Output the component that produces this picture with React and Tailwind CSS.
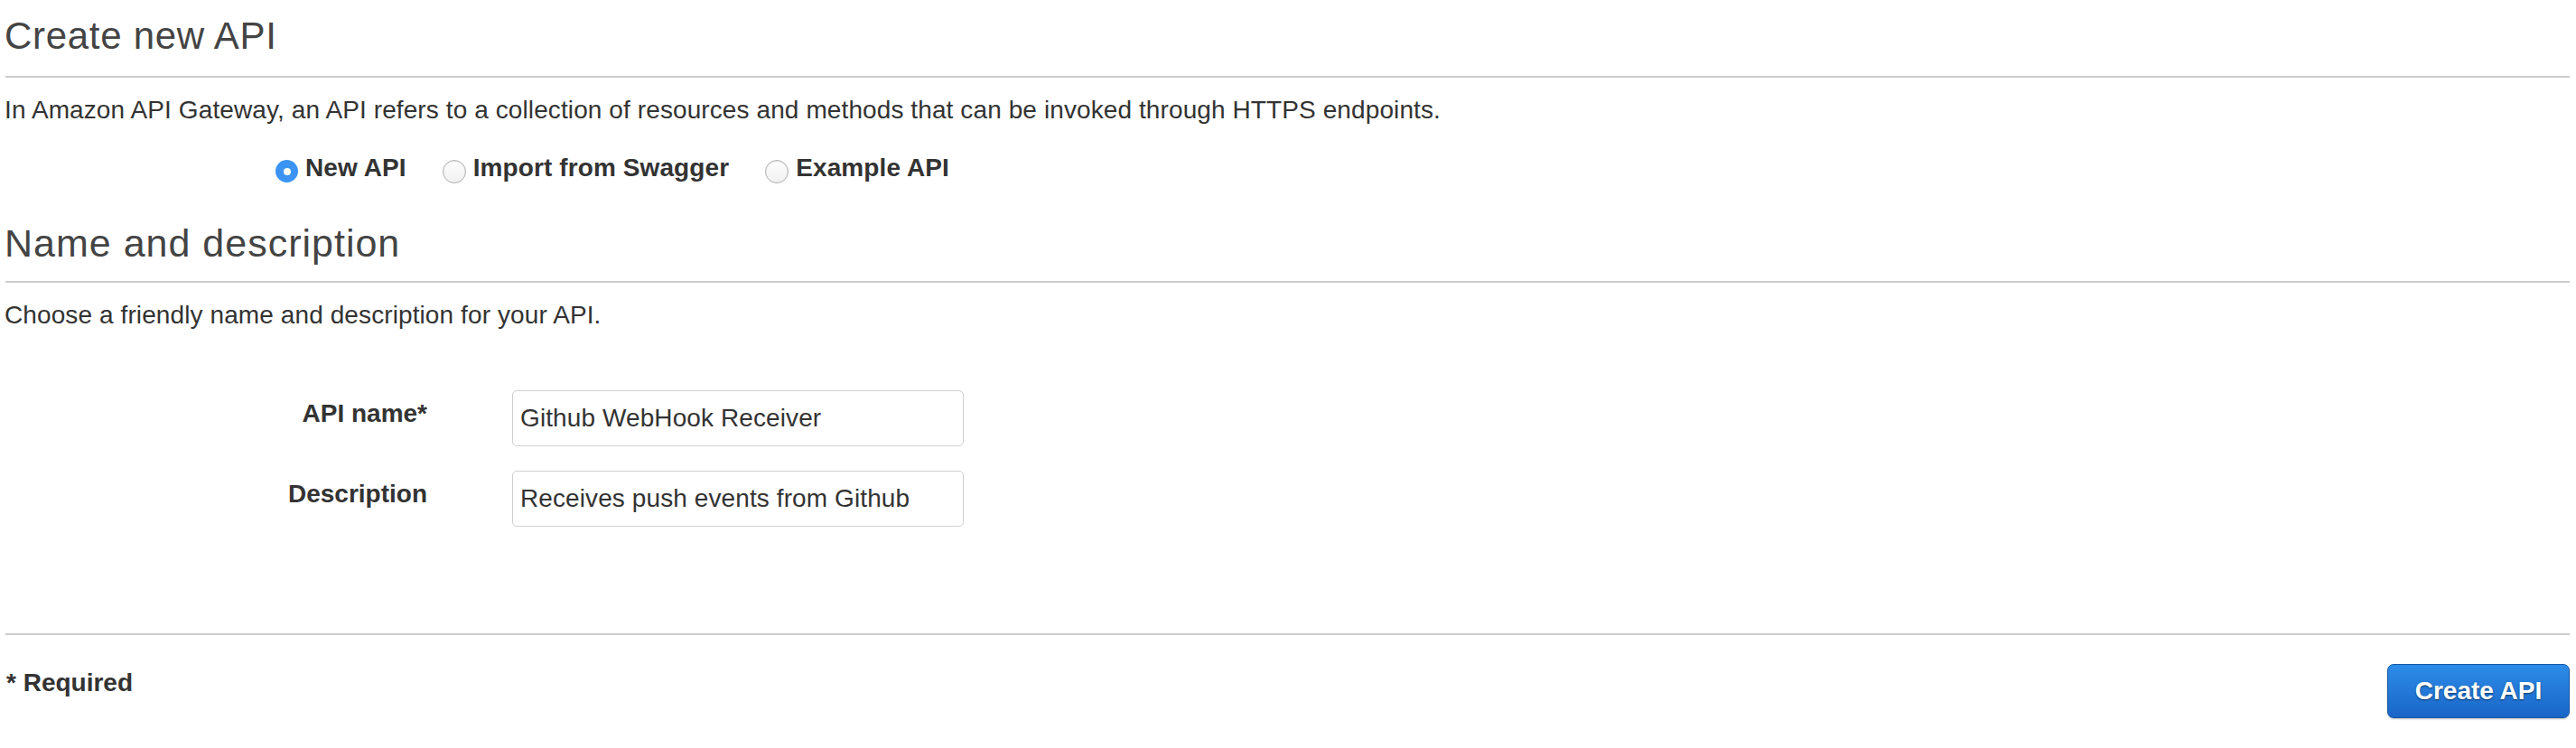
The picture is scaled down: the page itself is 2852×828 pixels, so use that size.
import React, { useState } from "react";

const OPTIONS = ["New API", "Import from Swagger", "Example API"];

function Radio({ label, checked, onSelect, first }) {
  return (
    <label
      className={`flex items-center gap-[8px] cursor-pointer ${first ? "" : "ml-[40px]"}`}
      onClick={onSelect}
    >
      {checked ? (
        <span className="mt-[7px] flex h-[25px] w-[25px] items-center justify-center rounded-full bg-[#3b94f3]">
          <span className="h-[8px] w-[8px] rounded-full bg-white" />
        </span>
      ) : (
        <span className="mt-[7px] h-[26px] w-[26px] rounded-full border border-[#b0b0b0] bg-gradient-to-b from-white to-[#f0f0f0] shadow-[inset_0_1px_2px_rgba(0,0,0,0.1)]" />
      )}
      <span className="text-[28px] font-bold leading-[36px] tracking-[0.1px] text-[#333]">{label}</span>
    </label>
  );
}

function Field({ label, value, onChange, className }) {
  return (
    <div className={`flex items-start ${className || ""}`}>
      <div className="w-[468px] pt-[8px] text-right text-[28px] font-bold leading-[36px] text-[#333]">
        {label}
      </div>
      <input
        value={value}
        onChange={(e) => onChange(e.target.value)}
        className="ml-[94px] h-[62px] w-[500px] rounded-[5px] border border-[#cfcfcf] px-[8px] text-[28px] tracking-[0.1px] text-[#333] outline-none focus:border-[#66afe9]"
      />
    </div>
  );
}

export default function App() {
  const [mode, setMode] = useState("New API");
  const [name, setName] = useState("Github WebHook Receiver");
  const [desc, setDesc] = useState("Receives push events from Github");

  return (
    <div
      className="min-h-[828px] bg-white pl-[5px] pr-[7px] pt-[15px] text-[#333]"
      style={{ fontFamily: '"Liberation Sans", Arial, Helvetica, sans-serif' }}
    >
      <h1 className="text-[42px] font-normal leading-[50px] tracking-[0.7px] text-[#444]">Create new API</h1>
      <hr className="mt-[19px] border-t-2 border-[#cccccc] ml-[1px]" />
      <p className="mt-[18px] text-[28px] leading-[36px] tracking-[0.1px] text-[#333]">
        In Amazon API Gateway, an API refers to a collection of resources and methods that can be invoked
        through HTTPS endpoints.
      </p>

      <div className="mt-[28px] flex items-center pl-[300px]">
        {OPTIONS.map((opt, i) => (
          <Radio
            key={opt}
            label={opt}
            first={i === 0}
            checked={mode === opt}
            onSelect={() => setMode(opt)}
          />
        ))}
      </div>

      <h2 className="mt-[40px] text-[43px] font-normal leading-[50px] tracking-[1px] text-[#444]">
        Name and description
      </h2>
      <hr className="mt-[17px] border-t-2 border-[#cccccc] ml-[1px]" />
      <p className="mt-[18px] text-[28px] leading-[36px] tracking-[0.1px] text-[#333]">
        Choose a friendly name and description for your API.
      </p>

      <Field label="API name*" value={name} onChange={setName} className="mt-[65px]" />
      <Field label="Description" value={desc} onChange={setDesc} className="mt-[27px]" />

      <hr className="mt-[118px] border-t-2 border-[#cccccc] ml-[1px]" />

      <div className="mt-[32px] flex items-start justify-between">
        <div className="mt-[3px] pl-[2px] text-[28px] font-bold leading-[36px] text-[#333]">* Required</div>
        <button
          type="button"
          className="h-[60px] w-[202px] rounded-[7px] border border-[#1656a3] bg-gradient-to-b from-[#2e8ce8] to-[#1965c8] text-[28px] font-bold text-white shadow-[0_1px_2px_rgba(0,0,0,0.25)] [text-shadow:0_1px_2px_rgba(0,0,0,0.55)]"
        >
          Create API
        </button>
      </div>
    </div>
  );
}
